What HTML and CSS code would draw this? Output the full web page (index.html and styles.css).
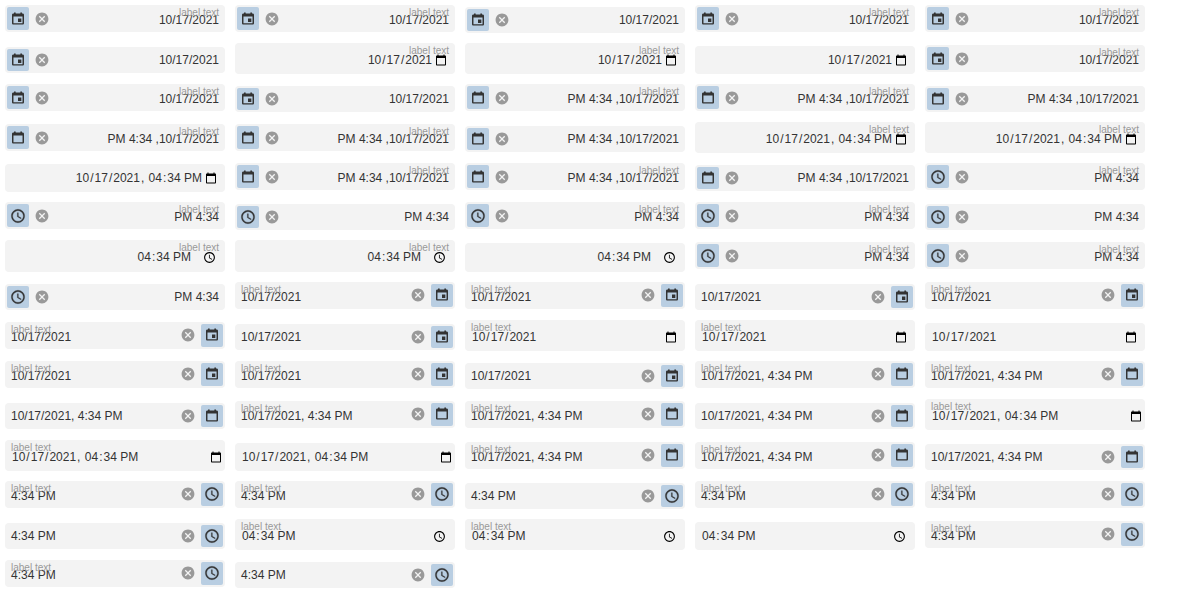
FILE: index.html
```html
<!DOCTYPE html>
<html lang="en">
<head>
<meta charset="utf-8">
<title>Date and time fields</title>
<link rel="stylesheet" href="styles.css">
</head>
<body>
<svg class="sprite" aria-hidden="true">
  <symbol id="i-datetime" viewBox="0 .6 24 24"><path fill-rule="evenodd" d="M6 2.700h2.500v1.500h7V2.700H18v1.500h1c1.100 0 2 .9 2 2V19c0 1.100-.9 2-2 2H5c-1.100 0-2-.9-2-2V6.200c0-1.100.9-2 2-2h1zM5.200 8.700v10.100h13.600V8.700z"/></symbol>
  <symbol id="i-date" viewBox="0 .6 24 24"><path fill-rule="evenodd" d="M6 2.700h2.500v1.500h7V2.700H18v1.500h1c1.100 0 2 .9 2 2V19c0 1.100-.9 2-2 2H5c-1.100 0-2-.9-2-2V6.200c0-1.100.9-2 2-2h1zM5.200 8.700v10.100h13.600V8.700zM12 12h5v5h-5z"/></symbol>
  <symbol id="i-time" viewBox="0 0 24 24"><path d="M11.990 2C6.470 2 2 6.480 2 12s4.470 10 9.990 10C17.520 22 22 17.520 22 12S17.520 2 11.990 2zM12 20c-4.420 0-8-3.580-8-8s3.580-8 8-8 8 3.580 8 8-3.580 8-8 8zm.5-13H11v6l5.250 3.150.75-1.230-4.500-2.670z"/></symbol>
  <symbol id="i-clear" viewBox="-.5 -.5 25 25"><path d="M12 2C6.470 2 2 6.470 2 12s4.470 10 10 10 10-4.470 10-10S17.530 2 12 2zm5 13.590L15.590 17 12 13.410 8.410 17 7 15.590 10.590 12 7 8.410 8.410 7 12 10.590 15.590 7 17 8.410 13.410 12 17 15.590z"/></symbol>
  <symbol id="i-picker" viewBox="0 0 24 24"><path d="M20 3h-1V1h-2v2H7V1H5v2H4c-1.100 0-2 .9-2 2v16c0 1.100.9 2 2 2h16c1.100 0 2-.9 2-2V5c0-1.100-.9-2-2-2zm0 18H4V8h16v13z"/></symbol>
</svg>
<main class="grid" id="grid"></main>
<script src="app.js"></script>
</body>
</html>
```

FILE: styles.css
```css
body {
  margin: 0;
  background: #fff;
  color: #333;
  font: 12px/14px "Liberation Sans", Arial, sans-serif;
  overflow: hidden;
}
.sprite { display: none; }
.grid {
  display: grid;
  grid-template-columns: repeat(5, 220px);
  grid-template-rows: 40px 39px 40px 39px 39px 40px 40px 40px 39px 40px 41px 39px 40px 39px 38px;
  column-gap: 10px;
  align-items: start;
  padding-left: 5px;
}
.field {
  position: relative;
  display: flex;
  box-sizing: border-box;
  height: 26px;
  margin-top: 7px;
  padding: 2px;
  border-radius: 4px;
  background: #f3f3f3;
}
.rtl { flex-direction: row-reverse; }
.labelled { height: 27px; margin-top: 5px; }
.native { height: 28px; margin-top: 6px; }
.native.labelled { height: 31px; margin-top: 3px; }
.rtl.native.time { height: 29px; }
.rtl.native.time.labelled { height: 32px; }

.label {
  position: absolute;
  top: 2px;
  left: 6px;
  color: #999;
  font-size: 10px;
  line-height: 11px;
}
.rtl .label { left: auto; right: 6px; }

.value {
  flex: 1;
  padding: 4px 4px 0;
  white-space: pre;
}
.labelled .value { padding-top: 6px; }
.native .value { padding-top: 5px; }
.native.labelled .value { padding-top: 8px; }
.rtl .value { text-align: right; }
.part { padding: 0 1px; }
.part.meridiem { margin-left: -2px; }

.clear {
  display: flex;
  align-items: center;
  margin: 0 5px;
  color: #999;
}
.button {
  display: flex;
  align-items: center;
  justify-content: center;
  box-sizing: border-box;
  width: 22px;
  border-radius: 2px;
  background: #b9cee2;
}
.ltr.labelled .clear,
.ltr.labelled .button { padding-bottom: 1px; }
.icon { display: block; width: 16px; height: 16px; fill: currentColor; }
.time .button .icon { stroke: currentColor; stroke-width: .4; }

.picker {
  align-self: flex-start;
  margin: 5.600px 6px 0 0;
  color: #000;
}
.labelled .picker { margin-top: 8.600px; }
.picker .icon { width: 12px; height: 12px; }
.ltr.datetime .picker { margin-right: 1px; }
.time .picker { margin-right: 7px; }
.time .picker .icon { width: 13px; height: 13px; }
.rtl.native .value { padding-right: 2px; }
.rtl.native.time .value { padding-right: 11px; }
```

FILE: app.js
```js
// Each entry: d = date, m = date and time, t = time;
// A = labelled, B = plain, N = native labelled, M = native plain.
const rtl = `dA dA dB dA dA  dB dN dN dM dA  dA dB mA mA mB  mA mA mB mN mN
  mM mA mA mB tA  tA tB tA tA tB  tN tN tM tA tA  tB`.split(/\s+/);
const ltr = `dA dA dB dA  dA dB dN dN dM  dA dA dB mA mA  mB mA mA mB mN
  mN mM mA mA mB  tA tA tB tA tA  tB tN tN tM tA  tA tB`.split(/\s+/);

const kinds = { d: "date", m: "datetime", t: "time" };
const icon = (name) => `<svg class="icon"><use href="#i-${name}"/></svg>`;
const parts = (text) => text
  .replace(/\d+/g, '<span class="part">$&</span>')
  .replace("PM", '<span class="part meridiem">PM</span>');

function text(kind, dir, native) {
  if (native) {
    return parts({ date: "10/17/2021", datetime: "10/17/2021, 04:34 PM", time: "04:34 PM" }[kind]);
  }
  const time = dir === "rtl" ? "PM 4:34" : "4:34 PM";
  if (kind === "date") return "10/17/2021";
  if (kind === "time") return time;
  return dir === "rtl" ? `${time} ,10/17/2021` : `10/17/2021, ${time}`;
}

function field(code, dir) {
  const kind = kinds[code[0]];
  const native = "NM".includes(code[1]);
  const labelled = "AN".includes(code[1]);
  const tools = native
    ? `<span class="picker">${icon(kind === "time" ? "time" : "picker")}</span>`
    : `<span class="clear">${icon("clear")}</span><span class="button">${icon(kind)}</span>`;
  return `<div class="field ${dir} ${kind}${native ? " native" : ""}${labelled ? " labelled" : ""}">
    ${native && dir === "rtl" ? tools : ""}
    ${labelled ? '<span class="label">label text</span>' : ""}
    <span class="value">${text(kind, dir, native)}</span>
    ${native && dir === "rtl" ? "" : tools}
  </div>`;
}

document.getElementById("grid").innerHTML =
  rtl.map((code) => field(code, "rtl")).join("") +
  ltr.map((code) => field(code, "ltr")).join("");
```
